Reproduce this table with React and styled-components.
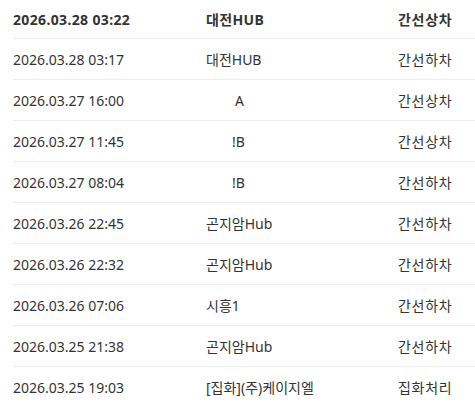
import React from 'react';
import styled, { createGlobalStyle } from 'styled-components';

const GlobalStyle = createGlobalStyle`
  body {
    margin: 0;
    background: #ffffff;
    font-family: "Noto Sans", "Noto Sans CJK KR", sans-serif;
    color: #333333;
  }
`

const Wrapper = styled.div`
  padding-left: 13px;
  width: 462px;
  overflow: hidden;
`

const Row = styled.div`
  display: grid;
  grid-template-columns: 193px 192px 1fr;
  align-items: center;
  height: ${p => (p.$head ? '38px' : '40px')};
  border-bottom: 1px solid #ececec;
  font-size: 14px;
  font-weight: ${p => (p.$head ? 700 : 400)};
  letter-spacing: ${p => (p.$head ? '0.35px' : '0')};
`

const Cell = styled.div`
  white-space: nowrap;
  padding-left: ${p => p.$indent || 0}px;
`

// korean labels render a little wider in the original
const Ko = styled.span`
  letter-spacing: 0.7px;
`

const rows = [
  ['2026.03.28 03:17', '대전HUB', '간선하차'],
  ['2026.03.27 16:00', 'A', '간선상차', 29],
  ['2026.03.27 11:45', '!B', '간선상차', 26],
  ['2026.03.27 08:04', '!B', '간선하차', 26],
  ['2026.03.26 22:45', '곤지암Hub', '간선하차'],
  ['2026.03.26 22:32', '곤지암Hub', '간선하차'],
  ['2026.03.26 07:06', '시흥1', '간선하차'],
  ['2026.03.25 21:38', '곤지암Hub', '간선하차'],
  ['2026.03.25 19:03', '[집화](주)케이지엘', '집화처리'],
]

const App = () => {
  return (
    <>
      <GlobalStyle />
      <Wrapper>
        <Row $head>
          <Cell>2026.03.28 03:22</Cell>
          <Cell>대전HUB</Cell>
          <Cell><Ko>간선상차</Ko></Cell>
        </Row>
        {rows.map((r, i) => (
          <Row key={i}>
            <Cell>{r[0]}</Cell>
            <Cell $indent={r[3]}>{r[1]}</Cell>
            <Cell><Ko>{r[2]}</Ko></Cell>
          </Row>
        ))}
      </Wrapper>
    </>
  )
}

export default App;
